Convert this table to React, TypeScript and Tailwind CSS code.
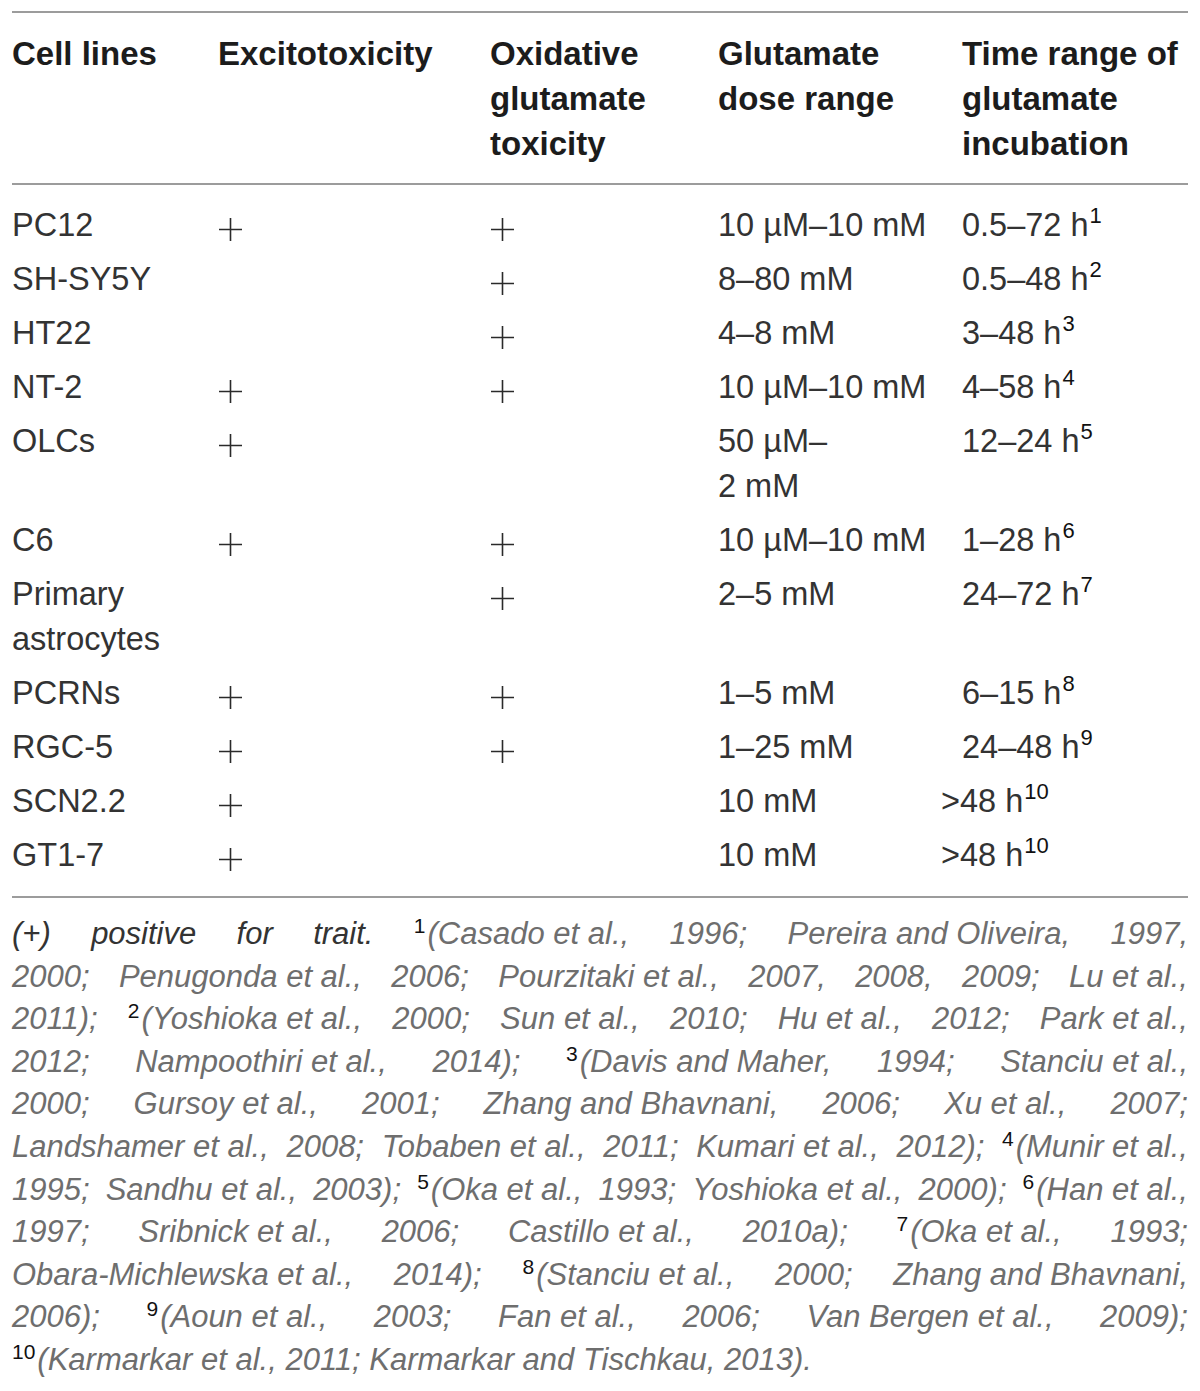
import React from 'react';

type Row = {
  name: string[];
  ex?: boolean;
  ox?: boolean;
  dose: string[];
  time: string;
  sup: string;
  hang?: boolean;
};

const rows: Row[] = [
  { name: ['PC12'], ex: true, ox: true, dose: ['10 µM–10 mM'], time: '0.5–72 h', sup: '1' },
  { name: ['SH-SY5Y'], ox: true, dose: ['8–80 mM'], time: '0.5–48 h', sup: '2' },
  { name: ['HT22'], ox: true, dose: ['4–8 mM'], time: '3–48 h', sup: '3' },
  { name: ['NT-2'], ex: true, ox: true, dose: ['10 µM–10 mM'], time: '4–58 h', sup: '4' },
  { name: ['OLCs'], ex: true, dose: ['50 µM–', '2 mM'], time: '12–24 h', sup: '5' },
  { name: ['C6'], ex: true, ox: true, dose: ['10 µM–10 mM'], time: '1–28 h', sup: '6' },
  { name: ['Primary', 'astrocytes'], ox: true, dose: ['2–5 mM'], time: '24–72 h', sup: '7' },
  { name: ['PCRNs'], ex: true, ox: true, dose: ['1–5 mM'], time: '6–15 h', sup: '8' },
  { name: ['RGC-5'], ex: true, ox: true, dose: ['1–25 mM'], time: '24–48 h', sup: '9' },
  { name: ['SCN2.2'], ex: true, dose: ['10 mM'], time: '>48 h', sup: '10', hang: true },
  { name: ['GT1-7'], ex: true, dose: ['10 mM'], time: '>48 h', sup: '10', hang: true },
];

// each footnote line is laid out as its own justified row; "^n" marks a superscript
const notes: string[][] = [
  ['(+)', 'positive', 'for', 'trait.', '^1(Casado et al.,', '1996;', 'Pereira and Oliveira,', '1997,'],
  ['2000;', 'Penugonda et al.,', '2006;', 'Pourzitaki et al.,', '2007,', '2008,', '2009;', 'Lu et al.,'],
  ['2011);', '^2(Yoshioka et al.,', '2000;', 'Sun et al.,', '2010;', 'Hu et al.,', '2012;', 'Park et al.,'],
  ['2012;', 'Nampoothiri et al.,', '2014);', '^3(Davis and Maher,', '1994;', 'Stanciu et al.,'],
  ['2000;', 'Gursoy et al.,', '2001;', 'Zhang and Bhavnani,', '2006;', 'Xu et al.,', '2007;'],
  ['Landshamer et al.,', '2008;', 'Tobaben et al.,', '2011;', 'Kumari et al.,', '2012);', '^4(Munir et al.,'],
  ['1995;', 'Sandhu et al.,', '2003);', '^5(Oka et al.,', '1993;', 'Yoshioka et al.,', '2000);', '^6(Han et al.,'],
  ['1997;', 'Sribnick et al.,', '2006;', 'Castillo et al.,', '2010a);', '^7(Oka et al.,', '1993;'],
  ['Obara-Michlewska et al.,', '2014);', '^8(Stanciu et al.,', '2000;', 'Zhang and Bhavnani,'],
  ['2006);', '^9(Aoun et al.,', '2003;', 'Fan et al.,', '2006;', 'Van Bergen et al.,', '2009);'],
  ['^10(Karmarkar et al., 2011; Karmarkar and Tischkau, 2013).'],
];

const Plus = () => (
  <svg width="25" height="25" viewBox="0 0 25 25" className="mt-[14px]">
    <path d="M12.5 1V24M1 12.5H24" stroke="#2a2a2a" strokeWidth="1.6" fill="none" />
  </svg>
);

const Segment = ({ text, dark }: { text: string; dark?: boolean }) => {
  const m = text.match(/^\^(\d+)(.*)$/);
  const body = m ? m[2] : text;
  return (
    <span className="whitespace-nowrap">
      {m && (
        <span className="relative -top-[11px] not-italic text-[21px] leading-none text-[#111] mr-[2px]">
          {m[1]}
        </span>
      )}
      <span className={dark ? 'text-[#333]' : 'text-[#6e6e6e]'}>{body}</span>
    </span>
  );
};

const App = () => {
  return (
    <div className="bg-white w-[1200px] min-h-[1391px] px-[12px] pt-[11px] font-['Liberation_Sans',Arial,sans-serif]">
      <div className="border-t-2 border-[#9c9c9c]" />

      <div className="grid grid-cols-[206px_272px_228px_244px_1fr] pt-[18px] pb-[17px] text-[33px] leading-[45px] font-bold text-[#1c1c1c]">
        <div>Cell lines</div>
        <div>Excitotoxicity</div>
        <div>
          Oxidative
          <br />
          glutamate
          <br />
          toxicity
        </div>
        <div>
          Glutamate
          <br />
          dose range
        </div>
        <div>
          Time range of
          <br />
          glutamate
          <br />
          incubation
        </div>
      </div>

      <div className="border-t-2 border-[#9c9c9c]" />

      <div className="pt-[13px] pb-[14px] text-[32.5px] leading-[45px] text-[#333]">
        {rows.map((r) => (
          <div key={r.name.join(' ')} className="grid grid-cols-[206px_272px_228px_244px_1fr] py-[4.5px]">
            <div>
              {r.name.map((n) => (
                <div key={n}>{n}</div>
              ))}
            </div>
            <div>{r.ex && <Plus />}</div>
            <div>{r.ox && <Plus />}</div>
            <div>
              {r.dose.map((d) => (
                <div key={d}>{d}</div>
              ))}
            </div>
            <div className={r.hang ? '-ml-[21px] whitespace-nowrap' : 'whitespace-nowrap'}>
              {r.time}
              <span className="relative -top-[13px] text-[22px] leading-none ml-[1px] text-[#111]">{r.sup}</span>
            </div>
          </div>
        ))}
      </div>

      <div className="border-t-2 border-[#9c9c9c]" />

      <div className="pt-[15px] text-[31px] italic">
        {notes.map((line, i) => (
          <div
            key={i}
            className={
              i === notes.length - 1
                ? 'flex h-[42.6px] leading-[42.6px]'
                : 'flex justify-between h-[42.6px] leading-[42.6px]'
            }
          >
            {line.map((s, j) => (
              <Segment key={j} text={s} dark={i === 0 && j < 4} />
            ))}
          </div>
        ))}
      </div>
    </div>
  );
};

export default App;
